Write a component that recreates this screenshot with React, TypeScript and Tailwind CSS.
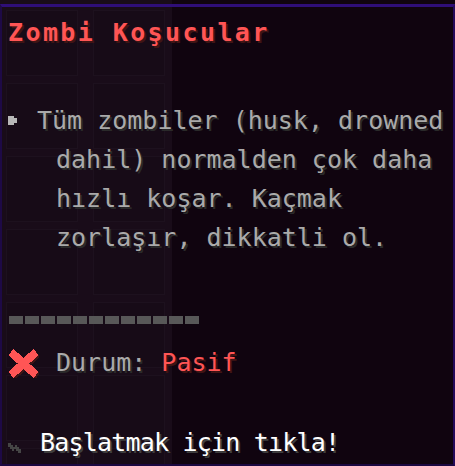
const font = { fontFamily: '"DejaVu Sans Mono", "Liberation Mono", monospace' };

function Bullet() {
  return (
    <svg width="10" height="9" viewBox="0 0 10 9" shapeRendering="crispEdges">
      <rect x="0" y="0" width="6" height="9" fill="#b8b8b8" />
      <rect x="6" y="2" width="3" height="5" fill="#b8b8b8" />
    </svg>
  );
}

function RedX() {
  return (
    <svg width="31" height="29" viewBox="0 0 31 29" shapeRendering="crispEdges">
      <path d="M3 3 L28 26 M28 3 L3 26" stroke="#3f1515" strokeWidth="8" transform="translate(1.5 1.5)" />
      <path d="M3 3 L28 26 M28 3 L3 26" stroke="#ff5555" strokeWidth="8" />
    </svg>
  );
}

function Spark() {
  return (
    <svg width="13" height="10" viewBox="0 0 13 10" shapeRendering="crispEdges">
      <path d="M0 0 h3 v2 h2 v2 h2 v-2 h2 v2 h2 v2 h2 v4 h-3 v-2 h-2 v-2 h-2 v2 h-2 v-2 h-2 v-2 h-2 z" fill="#454545" />
    </svg>
  );
}

const body = [
  "Tüm zombiler (husk, drowned",
  "dahil) normalden çok daha",
  "hızlı koşar. Kaçmak",
  "zorlaşır, dikkatli ol.",
];

export default function App() {
  const slots = Array.from({ length: 14 });
  return (
    <div className="relative w-[455px] h-[466px] overflow-hidden bg-[#10040f]" style={font}>
      {/* faint inventory slots showing through */}
      <div className="absolute left-0 top-0 w-[172px] h-full bg-[#190c19]">
        <div className="grid grid-cols-2 gap-[7px] pl-[6px] pt-[10px]">
          {slots.map((_, i) => (
            <div key={i} className="w-[72px] h-[66px] border border-[#1d111e] bg-[#170b17]" />
          ))}
        </div>
      </div>

      <div className="relative mt-[4px] h-[462px] border-t-[3px] border-t-[#2f0e78] border-l-[2px] border-l-[#1e0a46] border-r-[2px] border-r-[#240b5a] border-b-[2px] border-b-[#1a0840]">
        <div className="pt-[6px] text-[25px]">
          <div className="h-[40px] flex items-center pl-[6px] font-bold tracking-[2.4px] text-[#ff5555] [text-shadow:2px_2px_0_#3f1515]">
            Zombi Koşucular
          </div>

          <div className="mt-[48px] flex flex-col text-[#aaaaaa] [text-shadow:2px_2px_0_#2a2a2a]">
            {body.map((line, i) => (
              <div key={i} className="h-[39px] flex items-center whitespace-pre">
                {i === 0 ? (
                  <>
                    <span className="w-[35px] pl-[6px] flex items-center">
                      <Bullet />
                    </span>
                    <span>{line}</span>
                  </>
                ) : (
                  <span className="pl-[54px]">{line}</span>
                )}
              </div>
            ))}
          </div>

          <div className="mt-[59px] flex gap-[2px] pl-[7px]">
            {Array.from({ length: 12 }).map((_, i) => (
              <div key={i} className="w-[14px] h-[8px] bg-[#585858]" />
            ))}
          </div>

          <div className="mt-[19px] h-[40px] flex items-center pl-[6px] whitespace-pre [text-shadow:2px_2px_0_#2a2a2a]">
            <span className="w-[48px]">
              <RedX />
            </span>
            <span className="text-[#aaaaaa]">Durum: </span>
            <span className="text-[#ff5555] [text-shadow:2px_2px_0_#3f1515]">Pasif</span>
          </div>

          <div className="mt-[40px] h-[40px] flex items-center pl-[6px] whitespace-pre">
            <span className="w-[32px] pt-[10px]">
              <Spark />
            </span>
            <span className="text-white tracking-[-0.8px] [text-shadow:2px_2px_0_#3f3f3f]">Başlatmak için tıkla!</span>
          </div>
        </div>
      </div>
    </div>
  );
}
